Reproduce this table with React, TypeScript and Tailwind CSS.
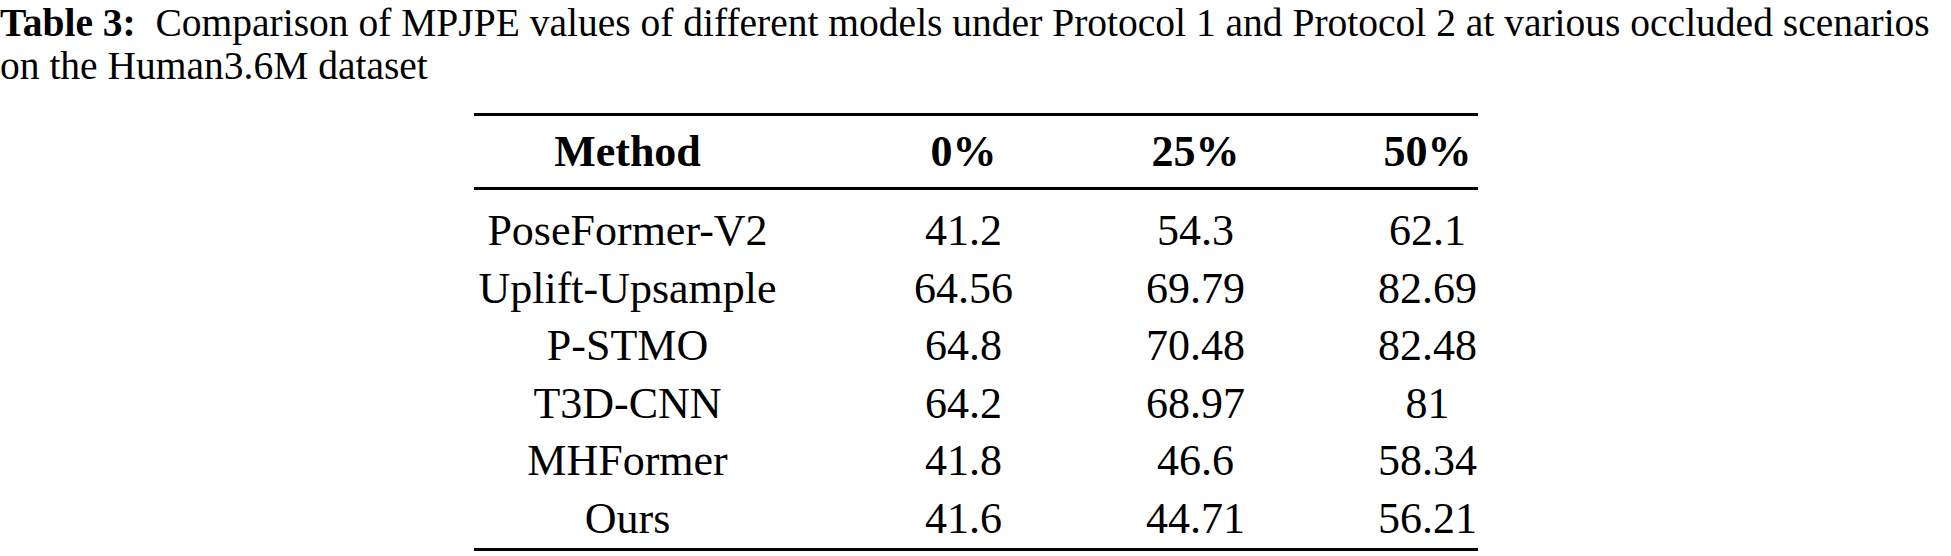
import React from "react";

const rows: [string, string, string, string][] = [
  ["PoseFormer-V2", "41.2", "54.3", "62.1"],
  ["Uplift-Upsample", "64.56", "69.79", "82.69"],
  ["P-STMO", "64.8", "70.48", "82.48"],
  ["T3D-CNN", "64.2", "68.97", "81"],
  ["MHFormer", "41.8", "46.6", "58.34"],
  ["Ours", "41.6", "44.71", "56.21"],
];

export default function App() {
  return (
    <div
      className="w-[1951px] h-[556px] bg-white text-black overflow-hidden"
      style={{ fontFamily: '"Liberation Serif", "Times New Roman", serif' }}
    >
      <div className="pt-[2px] text-[39.5px] leading-[43px] whitespace-nowrap">
        <div>
          <span className="font-bold">Table 3:</span>
          <span>&nbsp; Comparison of MPJPE values of different models under Protocol 1 and Protocol 2 at various occluded scenarios</span>
        </div>
        <div>on the Human3.6M dataset</div>
      </div>

      <div className="mx-auto mt-[25px] w-[1004px] text-[44px] whitespace-nowrap">
        <div className="h-[3px] bg-black" />
        <div className="grid grid-cols-[308px_100px_100px_100px] gap-x-[132px] h-[71px] items-center font-bold text-center">
          <div>Method</div>
          <div>0%</div>
          <div>25%</div>
          <div>50%</div>
        </div>
        <div className="h-[3px] bg-black" />
        <div className="pt-[8px] pb-[5px]">
          {rows.map((r) => (
            <div
              key={r[0]}
              className="grid grid-cols-[308px_100px_100px_100px] gap-x-[132px] h-[57.5px] items-center text-center"
            >
              <div>{r[0]}</div>
              <div>{r[1]}</div>
              <div>{r[2]}</div>
              <div>{r[3]}</div>
            </div>
          ))}
        </div>
        <div className="h-[3px] bg-black" />
      </div>
    </div>
  );
}
